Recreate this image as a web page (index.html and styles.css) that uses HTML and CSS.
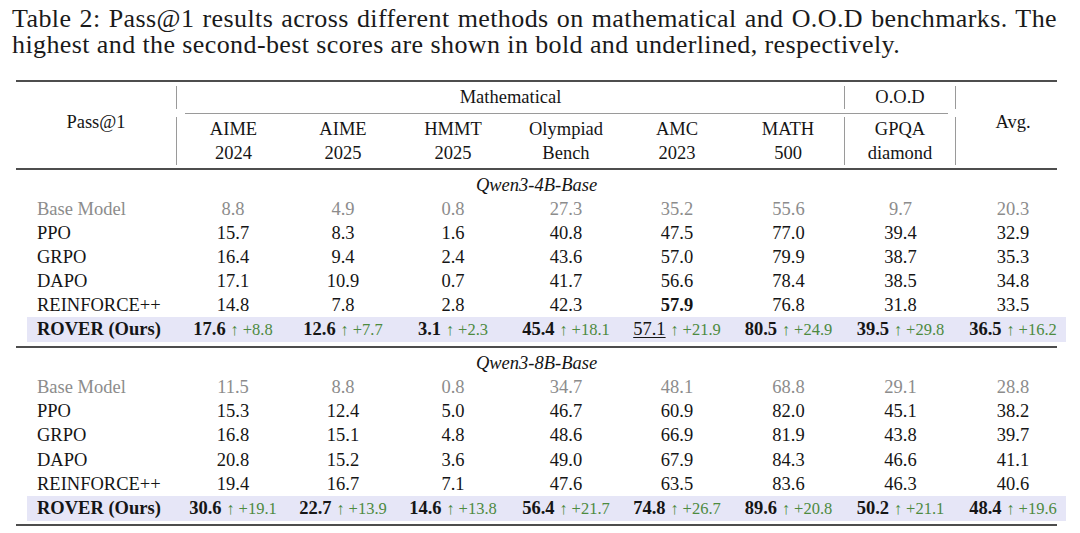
FILE: index.html
```html
<!DOCTYPE html>
<html>
<head>
<meta charset="utf-8">
<title>Table 2</title>
<link rel="stylesheet" href="styles.css">
</head>
<body>
<p class="caption">Table 2: Pass@1 results across different methods on mathematical and O.O.D benchmarks. The highest and the second-best scores are shown in bold and underlined, respectively.</p>
<div class="table">
  <div class="thead">
    <div class="h-pass">Pass@1</div>
    <div class="h-math">Mathematical</div>
    <div class="h-ood">O.O.D</div>
    <div class="h-avg">Avg.</div>
    <div class="h-rule"></div>
    <div class="h-col sep-l">AIME<br>2024</div>
    <div class="h-col">AIME<br>2025</div>
    <div class="h-col">HMMT<br>2025</div>
    <div class="h-col">Olympiad<br>Bench</div>
    <div class="h-col">AMC<br>2023</div>
    <div class="h-col sep-r">MATH<br>500</div>
    <div class="h-col sep-r">GPQA<br>diamond</div>
  </div>

  <div class="block">
    <div class="gtitle">Qwen3-4B-Base</div>
    <div class="row base"><span class="lbl">Base Model</span><span>8.8</span><span>4.9</span><span>0.8</span><span>27.3</span><span>35.2</span><span>55.6</span><span>9.7</span><span>20.3</span></div>
    <div class="row"><span class="lbl">PPO</span><span>15.7</span><span>8.3</span><span>1.6</span><span>40.8</span><span>47.5</span><span>77.0</span><span>39.4</span><span>32.9</span></div>
    <div class="row"><span class="lbl">GRPO</span><span>16.4</span><span>9.4</span><span>2.4</span><span>43.6</span><span>57.0</span><span>79.9</span><span>38.7</span><span>35.3</span></div>
    <div class="row"><span class="lbl">DAPO</span><span>17.1</span><span>10.9</span><span>0.7</span><span>41.7</span><span>56.6</span><span>78.4</span><span>38.5</span><span>34.8</span></div>
    <div class="row"><span class="lbl">REINFORCE++</span><span>14.8</span><span>7.8</span><span>2.8</span><span>42.3</span><span><b>57.9</b></span><span>76.8</span><span>31.8</span><span>33.5</span></div>
    <div class="row hl"><span class="lbl"><b>ROVER (Ours)</b></span><span><b>17.6</b> <span class="inc">↑ +8.8</span></span><span><b>12.6</b> <span class="inc">↑ +7.7</span></span><span><b>3.1</b> <span class="inc">↑ +2.3</span></span><span><b>45.4</b> <span class="inc">↑ +18.1</span></span><span><u>57.1</u> <span class="inc">↑ +21.9</span></span><span><b>80.5</b> <span class="inc">↑ +24.9</span></span><span><b>39.5</b> <span class="inc">↑ +29.8</span></span><span><b>36.5</b> <span class="inc">↑ +16.2</span></span></div>
  </div>

  <div class="block last">
    <div class="gtitle">Qwen3-8B-Base</div>
    <div class="row base"><span class="lbl">Base Model</span><span>11.5</span><span>8.8</span><span>0.8</span><span>34.7</span><span>48.1</span><span>68.8</span><span>29.1</span><span>28.8</span></div>
    <div class="row"><span class="lbl">PPO</span><span>15.3</span><span>12.4</span><span>5.0</span><span>46.7</span><span>60.9</span><span>82.0</span><span>45.1</span><span>38.2</span></div>
    <div class="row"><span class="lbl">GRPO</span><span>16.8</span><span>15.1</span><span>4.8</span><span>48.6</span><span>66.9</span><span>81.9</span><span>43.8</span><span>39.7</span></div>
    <div class="row"><span class="lbl">DAPO</span><span>20.8</span><span>15.2</span><span>3.6</span><span>49.0</span><span>67.9</span><span>84.3</span><span>46.6</span><span>41.1</span></div>
    <div class="row"><span class="lbl">REINFORCE++</span><span>19.4</span><span>16.7</span><span>7.1</span><span>47.6</span><span>63.5</span><span>83.6</span><span>46.3</span><span>40.6</span></div>
    <div class="row hl"><span class="lbl"><b>ROVER (Ours)</b></span><span><b>30.6</b> <span class="inc">↑ +19.1</span></span><span><b>22.7</b> <span class="inc">↑ +13.9</span></span><span><b>14.6</b> <span class="inc">↑ +13.8</span></span><span><b>56.4</b> <span class="inc">↑ +21.7</span></span><span><b>74.8</b> <span class="inc">↑ +26.7</span></span><span><b>89.6</b> <span class="inc">↑ +20.8</span></span><span><b>50.2</b> <span class="inc">↑ +21.1</span></span><span><b>48.4</b> <span class="inc">↑ +19.6</span></span></div>
  </div>
</div>
</body>
</html>
```

FILE: styles.css
```css
* {
  box-sizing: border-box;
  margin: 0;
  padding: 0;
}

html, body {
  background: #ffffff;
}

body {
  width: 1080px;
  height: 533px;
  overflow: hidden;
  font-family: "Liberation Serif", "Times New Roman", serif;
  color: #151515;
  --cols: 160px 114px 106px 114px 112px 110px 113px 111px 101px;
}

/* caption */
.caption {
  margin: 6px 23px 0 12px;
  font-size: 26px;
  line-height: 26px;
  letter-spacing: 0.4px;
  text-align: justify;
  color: #1a1a1a;
}

/* table */
.table {
  margin: 21.5px 0 0 16px;
  width: 1041px;
  font-size: 18.5px;
  border-top: 2px solid #4d4d4d;
  border-bottom: 2px solid #4d4d4d;
}

.thead {
  display: grid;
  grid-template-columns: var(--cols);
  grid-template-rows: 23px 8px 48px;
  padding: 4px 0 3px;
  border-bottom: 2px solid #4d4d4d;
  text-align: center;
  line-height: 24px;
}

.h-pass {
  grid-column: 1;
  grid-row: 1 / 4;
  padding-top: 24px;
}

.h-math {
  grid-column: 2 / 8;
  grid-row: 1;
  line-height: 23px;
  border-left: 1px solid #9a9a9a;
  border-right: 1px solid #9a9a9a;
}

.h-ood {
  grid-column: 8;
  grid-row: 1;
  line-height: 23px;
  border-right: 1px solid #9a9a9a;
}

.h-avg {
  grid-column: 9;
  grid-row: 1 / 4;
  padding-top: 24px;
  padding-left: 13px;
}

.h-rule {
  grid-column: 2 / 9;
  grid-row: 2;
  margin: 4px 8px 0 9px;
  height: 1px;
  background: #9a9a9a;
}

.h-col {
  grid-row: 3;
}

.sep-l {
  border-left: 1px solid #9a9a9a;
}

.sep-r {
  border-right: 1px solid #9a9a9a;
}

/* body */
.block {
  padding: 3px 0 4px;
  border-bottom: 2px solid #4d4d4d;
}

.block.last {
  border-bottom: none;
  padding: 3px 0 3px;
}

.gtitle {
  font-style: italic;
  text-align: center;
  line-height: 24.1px;
}

.row {
  display: grid;
  grid-template-columns: var(--cols);
  line-height: 24.1px;
  text-align: center;
  white-space: nowrap;
}

.row .lbl {
  text-align: left;
  padding-left: 21px;
}

.row > :last-child {
  padding-left: 13px;
}

.row.base {
  color: #8c8c8c;
}

.row.hl {
  margin-right: -9px;
  padding-right: 9px;
  background: linear-gradient(#e6e6f7, #e6e6f7) 11px 0 / calc(100% - 11px) 100% no-repeat;
}

.row b {
  font-weight: bold;
}

.row u {
  text-decoration: underline;
  text-underline-offset: 2px;
  text-decoration-thickness: 1px;
}

.inc {
  font-size: 16.5px;
  color: #4d8a3f;
}
```
